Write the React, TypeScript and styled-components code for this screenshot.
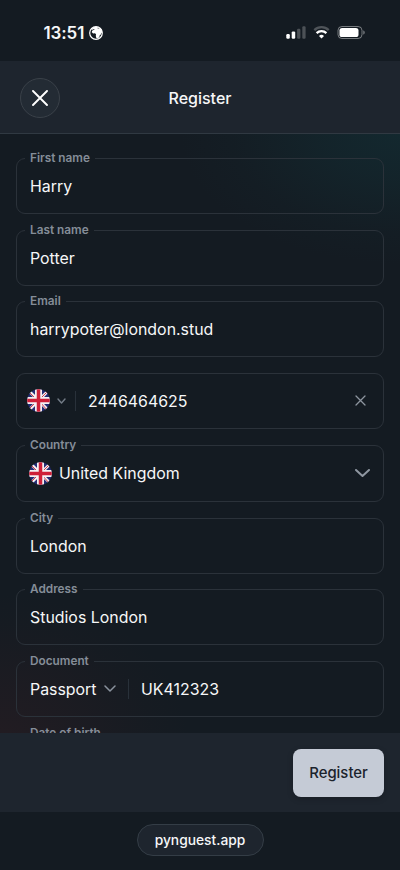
import React from "react";
import styled, { createGlobalStyle } from "styled-components";

const GlobalStyle = createGlobalStyle`
  *, *::before, *::after { box-sizing: border-box; }
  body {
    margin: 0;
    background: #141b22;
    color: #f6f7f8;
    font-family: Inter, "Liberation Sans", sans-serif;
    -webkit-font-smoothing: antialiased;
  }
`;

const Screen = styled.div`
  width: 400px;
  height: 870px;
  display: flex;
  flex-direction: column;
  overflow: hidden;
  background: #141b22;
`;

const StatusBar = styled.div`
  height: 61px;
  flex: none;
  display: flex;
  justify-content: space-between;
  align-items: center;
  padding: 4px 35px 0 43.5px;
`;

const Clock = styled.div`
  display: flex;
  align-items: center;
  gap: 5px;
  font-size: 17px;
  font-weight: 600;
  line-height: 20px;
  letter-spacing: -0.1px;
`;

const Indicators = styled.div`
  display: flex;
  align-items: center;
  gap: 7px;
`;

const Header = styled.header`
  height: 73px;
  flex: none;
  display: grid;
  grid-template-columns: 40px 1fr 40px;
  align-items: center;
  padding: 1px 20px 0;
  background: #1e252e;
  border-bottom: 1px solid #303942;
`;

const CloseButton = styled.button`
  width: 40px;
  height: 40px;
  padding: 0;
  display: grid;
  place-items: center;
  border-radius: 50%;
  border: 1px solid #3a4149;
  background: #232b34;
  color: #ffffff;
`;

const Title = styled.h1`
  margin: 0;
  text-align: center;
  font-size: 16px;
  font-weight: 500;
  line-height: 20px;
`;

const Form = styled.form`
  flex: 1;
  min-height: 0;
  overflow: hidden;
  display: flex;
  flex-direction: column;
  gap: 15.67px;
  padding: 24px 16px 0;
  background:
    radial-gradient(
      ellipse 220px 130px at 400px 0,
      rgba(18, 56, 62, 0.45),
      rgba(18, 56, 62, 0.3) 35%,
      rgba(18, 56, 62, 0.08) 75%,
      rgba(18, 56, 62, 0) 100%
    ),
    radial-gradient(
      ellipse 190px 150px at 0 610px,
      rgba(62, 30, 34, 0.34),
      rgba(62, 30, 34, 0.2) 40%,
      rgba(62, 30, 34, 0.05) 80%,
      rgba(62, 30, 34, 0) 100%
    );
`;

const Fieldset = styled.fieldset`
  flex: none;
  min-width: 0;
  margin: 0;
  padding: 0 8px;
  border: 1px solid #2b323a;
  border-radius: 9px;
`;

const Legend = styled.legend`
  height: 1px;
  padding: 0 5px;
  color: #858d98;
  font-size: 11.8px;
  font-weight: 600;
  line-height: 0;
  white-space: nowrap;
`;

const Control = styled.div<{ $pad?: number; $height?: number }>`
  height: ${(p) => p.$height ?? 54}px;
  display: flex;
  align-items: center;
  padding: 0 5px 0 ${(p) => p.$pad ?? 5}px;
  font-size: 15.9px;
  line-height: 20px;
`;

const Value = styled.span<{ $left?: number }>`
  margin-left: ${(p) => p.$left ?? 0}px;
  padding-top: 2px;
  white-space: nowrap;
`;

const Trailing = styled.span<{ $right?: number }>`
  display: flex;
  margin-left: auto;
  margin-right: ${(p) => p.$right ?? 0}px;
`;

const Caret = styled.span<{ $left: number }>`
  display: flex;
  margin-left: ${(p) => p.$left}px;
`;

const Divider = styled.span<{ $left: number }>`
  width: 1px;
  height: 20px;
  margin-left: ${(p) => p.$left}px;
  background: #29313a;
`;

const Footer = styled.footer`
  height: 79px;
  flex: none;
  display: flex;
  align-items: center;
  justify-content: flex-end;
  padding: 0 16px;
  background: #1e252e;
`;

const SubmitButton = styled.button`
  width: 91px;
  height: 48px;
  padding: 0;
  border: 0;
  border-radius: 8px;
  background: #c5cbd6;
  color: #1b232c;
  font: 500 14.9px/20px Inter, sans-serif;
  box-shadow: 0 2px 6px rgba(0, 0, 0, 0.2);
`;

const BrowserBar = styled.div`
  height: 58px;
  flex: none;
  display: flex;
  justify-content: center;
  align-items: flex-start;
  padding-top: 12px;
`;

const AddressPill = styled.div`
  width: 127px;
  height: 32px;
  display: grid;
  place-items: center;
  border: 1px solid #343d46;
  border-radius: 16px;
  background: #1e252e;
  font-size: 13.8px;
  font-weight: 500;
  line-height: 18px;
`;

const GlobeIcon = () => (
  <svg width="14" height="14" viewBox="0 0 14 14">
    <circle cx="7" cy="7" r="6.3" fill="none" stroke="#fff" strokeWidth="1.2" />
    <path
      fill="#fff"
      d="M2.4 3.4 4 1.6l2.4-.9 2.6.3-.6 1.2 1.6.3 1.2-.6 1.5 1.6.4 1.5.2 1.4-.9.6-.6 1.6-1.2 1-.2 1.3-1.4 1.3H7.4l-.6-2.3.2-1.6-1-1-1.9.1-1.3-1.1.3-1.5 1.5-.9 1.2-.7-.9-.3-1.3.9Z"
    />
  </svg>
);

const SignalIcon = () => (
  <svg width="20" height="13" viewBox="0 0 20 13" fill="#fff">
    <rect x="0.3" y="8" width="3.5" height="4.8" rx="1.2" />
    <rect x="5.7" y="5.4" width="3.5" height="7.4" rx="1.2" />
    <rect x="11.1" y="2.8" width="3.3" height="10" rx="1.1" opacity="0.24" />
    <rect x="16.3" y="0.3" width="3.3" height="12.5" rx="1.1" opacity="0.24" />
  </svg>
);

const WifiIcon = () => (
  <svg width="17" height="13" viewBox="0 0 17 13">
    <path d="M1.3 4.1a10.4 10.4 0 0 1 14.4 0" fill="none" stroke="#fff" strokeWidth="2.3" opacity="0.25" />
    <path d="M3.6 7.1a7 7 0 0 1 9.8 0" fill="none" stroke="#fff" strokeWidth="2.3" />
    <path d="M6 9.9a3.6 3.6 0 0 1 5 0L8.5 12.6Z" fill="#fff" />
  </svg>
);

const BatteryIcon = () => (
  <svg width="28" height="13" viewBox="0 0 28 13">
    <rect x="1" y="0.5" width="24" height="12" rx="3.9" fill="none" stroke="#fff" opacity="0.42" />
    <rect x="2.5" y="2" width="19" height="9" rx="2.6" fill="#fff" />
    <path d="M26.3 4.5c1.9.7 1.9 3.3 0 4Z" fill="#fff" opacity="0.45" />
  </svg>
);

const CrossIcon = ({ size, weight, color }: { size: number; weight: number; color: string }) => (
  <svg width={size} height={size} viewBox={`0 0 ${size} ${size}`}>
    <path
      d={`M1 1 ${size - 1} ${size - 1}M${size - 1} 1 1 ${size - 1}`}
      stroke={color}
      strokeWidth={weight}
      strokeLinecap="round"
    />
  </svg>
);

const ChevronIcon = ({ width, height, weight, color }: { width: number; height: number; weight: number; color: string }) => (
  <svg width={width} height={height} viewBox={`0 0 ${width} ${height}`}>
    <path
      d={`M1 1 ${width / 2} ${height - 1} ${width - 1} 1`}
      fill="none"
      stroke={color}
      strokeWidth={weight}
      strokeLinecap="round"
      strokeLinejoin="round"
    />
  </svg>
);

const UkFlag = ({ id }: { id: string }) => (
  <svg width="23" height="23" viewBox="0 0 46 46">
    <clipPath id={id}>
      <circle cx="23" cy="23" r="22.6" />
    </clipPath>
    <g clipPath={`url(#${id})`}>
      <path fill="#242d73" d="M0 0h46v46H0z" />
      <path d="M3 3 43 43M43 3 3 43" stroke="#f4f1f3" strokeWidth="6" />
      <path d="M4 6 20 22M42 4 26 20M26 26 40 42M4 40 20 24" stroke="#d23b4e" strokeWidth="2" />
      <path d="M23 0v46M0 23h46" stroke="#f4f1f3" strokeWidth="14" />
      <path d="M23 0v46M0 23h46" stroke="#cf1f38" strokeWidth="7" />
    </g>
  </svg>
);

const TextField = ({ label, value }: { label: string; value: string }) => (
  <Fieldset>
    <Legend>{label}</Legend>
    <Control>
      <Value>{value}</Value>
    </Control>
  </Fieldset>
);

export default function App() {
  return (
    <>
      <GlobalStyle />
      <Screen>
        <StatusBar>
          <Clock>
            13:51
            <GlobeIcon />
          </Clock>
          <Indicators>
            <SignalIcon />
            <WifiIcon />
            <BatteryIcon />
          </Indicators>
        </StatusBar>
        <Header>
          <CloseButton type="button" aria-label="Close">
            <CrossIcon size={16} weight={1.9} color="#ffffff" />
          </CloseButton>
          <Title>Register</Title>
        </Header>
        <Form>
          <TextField label="First name" value="Harry" />
          <TextField label="Last name" value="Potter" />
          <TextField label="Email" value="harrypoter@london.stud" />
          <Fieldset>
            <Control $pad={2}>
              <UkFlag id="phone-flag" />
              <Caret $left={7}>
                <ChevronIcon width={9} height={6} weight={1.4} color="#737c87" />
              </Caret>
              <Divider $left={9} />
              <Value $left={12}>2446464625</Value>
              <Trailing $right={4}>
                <CrossIcon size={11} weight={1.3} color="#8d959f" />
              </Trailing>
            </Control>
          </Fieldset>
          <Fieldset>
            <Legend>Country</Legend>
            <Control $pad={3.5} $height={55.4}>
              <UkFlag id="country-flag" />
              <Value $left={7.5}>United Kingdom</Value>
              <Trailing>
                <ChevronIcon width={15} height={8} weight={2} color="#8f97a1" />
              </Trailing>
            </Control>
          </Fieldset>
          <TextField label="City" value="London" />
          <TextField label="Address" value="Studios London" />
          <Fieldset>
            <Legend>Document</Legend>
            <Control>
              <Value>Passport</Value>
              <Caret $left={7}>
                <ChevronIcon width={12} height={7} weight={1.5} color="#8a929d" />
              </Caret>
              <Divider $left={12} />
              <Value $left={12.5}>UK412323</Value>
            </Control>
          </Fieldset>
          <Fieldset>
            <Legend>Date of birth</Legend>
            <Control />
          </Fieldset>
        </Form>
        <Footer>
          <SubmitButton type="button">Register</SubmitButton>
        </Footer>
        <BrowserBar>
          <AddressPill>pynguest.app</AddressPill>
        </BrowserBar>
      </Screen>
    </>
  );
}
